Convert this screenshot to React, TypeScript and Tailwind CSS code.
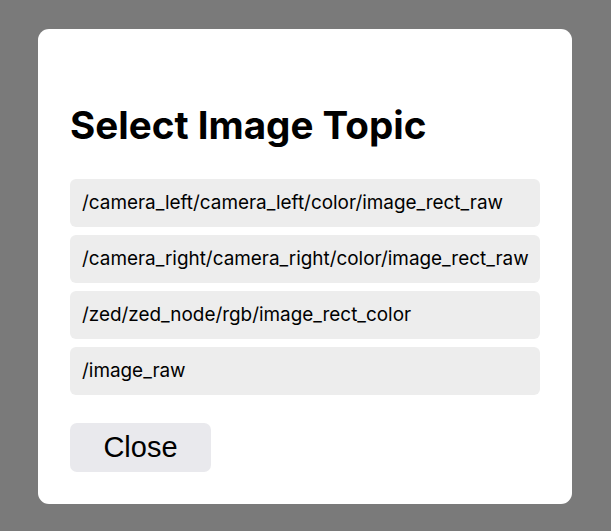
const topics = [
  '/camera_left/camera_left/color/image_rect_raw',
  '/camera_right/camera_right/color/image_rect_raw',
  '/zed/zed_node/rgb/image_rect_color',
  '/image_raw',
];

export default function App() {
  return (
    <div
      className="flex h-screen w-full items-start bg-[#7a7a7a] pl-[38px] pt-[29px] text-black"
      style={{ fontFamily: 'Inter, "Noto Sans", sans-serif' }}
    >
      <div className="w-[534px] rounded-[11px] bg-white px-8 pb-8 pt-[72px]">
        <h1 className="text-[38.6px] font-bold leading-[48px]">Select Image Topic</h1>

        <ul className="mt-[30px] flex flex-col gap-2">
          {topics.map((t) => (
            <li
              key={t}
              className="flex h-12 items-center rounded-[6px] bg-[#ededed] px-3 text-[18.9px]"
            >
              {t}
            </li>
          ))}
        </ul>

        <button
          className="mt-7 h-[49px] w-[141px] rounded-[7px] bg-[#e9e9ed] text-[29px]"
          style={{ fontFamily: '"Liberation Sans", Arial, sans-serif' }}
        >
          Close
        </button>
      </div>
    </div>
  );
}
